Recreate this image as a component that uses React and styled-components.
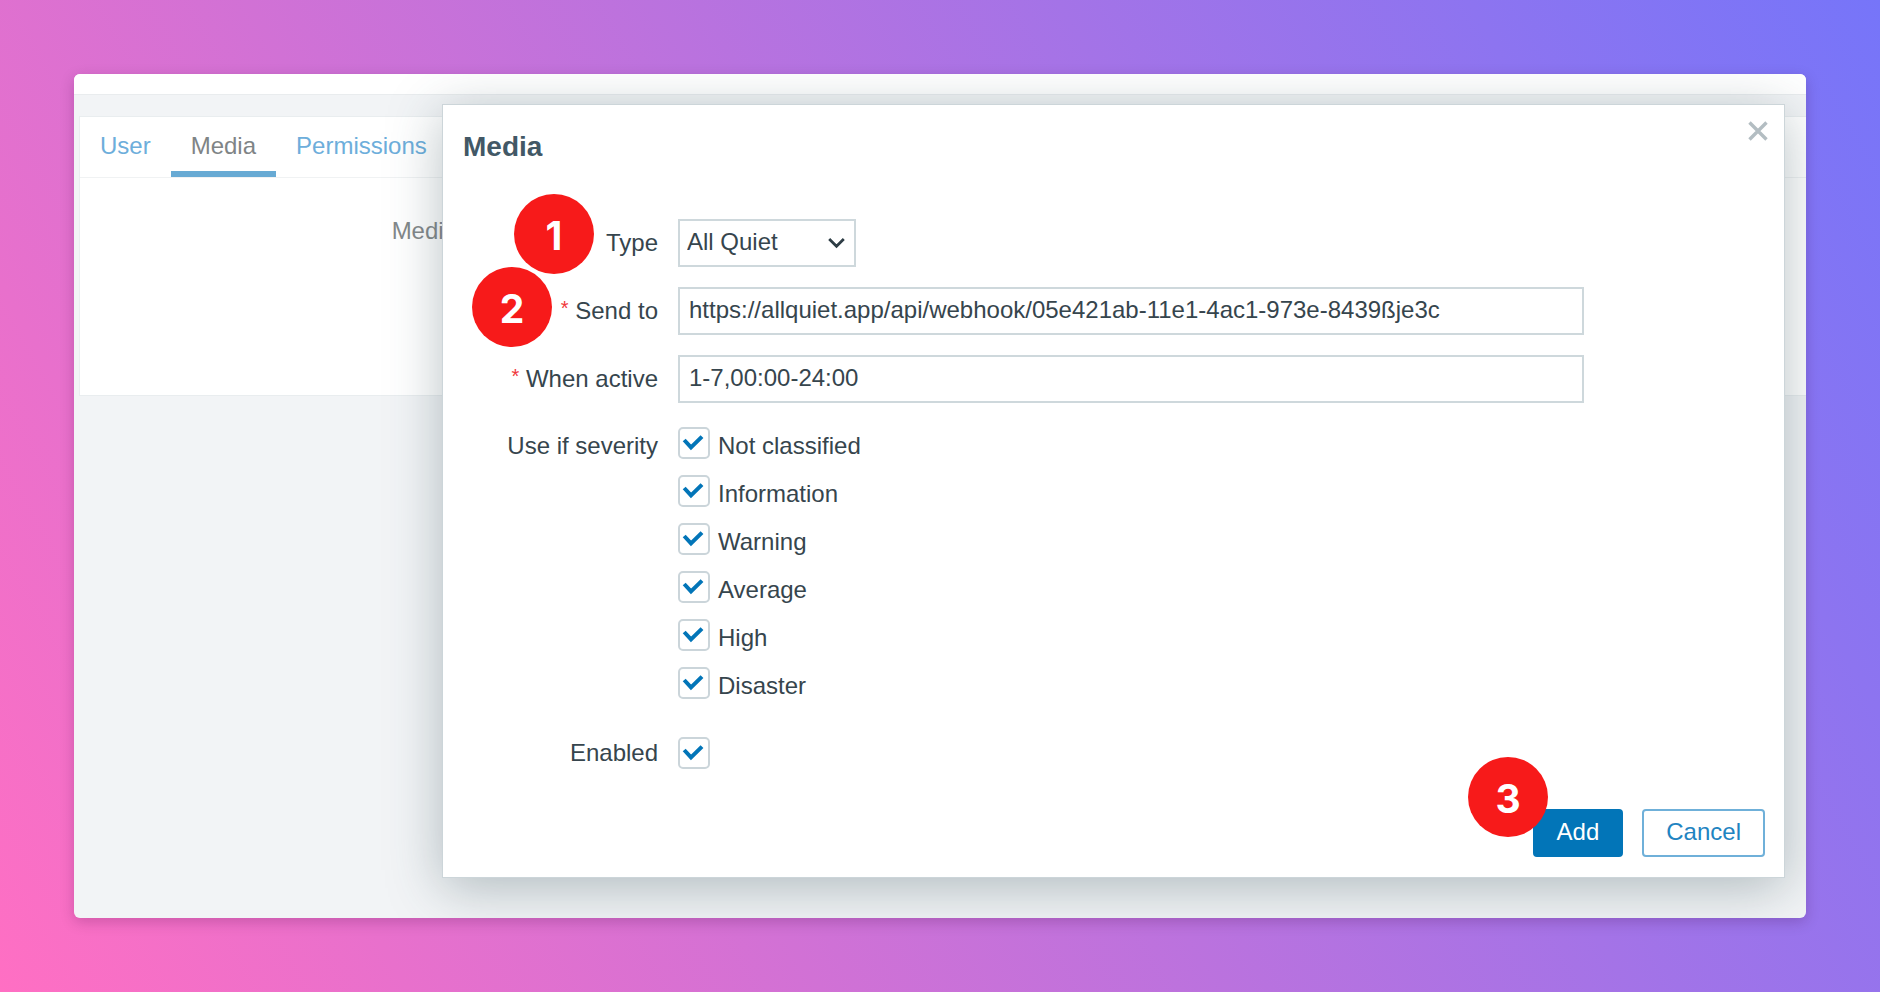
import React from "react";
import styled, { createGlobalStyle, css } from "styled-components";

const GlobalStyle = createGlobalStyle`
  * { box-sizing: border-box; }
  body {
    margin: 0;
    color: #36454d;
    font-family: "Liberation Sans", Arial, sans-serif;
    font-size: 24px;
    line-height: 28px;
  }
`;

const Backdrop = styled.div`
  display: flex;
  min-height: 100vh;
  padding: 74px;
  background: linear-gradient(60deg, #ff6fc3, #7675f9);
`;

const Window = styled.main`
  position: relative;
  flex: 1;
  min-width: 0;
  overflow: hidden;
  border-radius: 6px;
  background: #f2f4f6;
`;

const WindowShadow = styled.div`
  display: flex;
  flex: 1;
  min-width: 0;
  border-radius: 6px;
  box-shadow: 0 4px 14px rgba(60, 0, 60, 0.22);
`;

const TopBar = styled.div`
  height: 21px;
  border-bottom: 1px solid #e9ecee;
  background: #fff;
`;

const Card = styled.section`
  margin: 21px 0 0 5px;
  border: 1px solid #e9edef;
  border-right: 0;
  background: #fff;
`;

const Tabs = styled.nav`
  display: flex;
  height: 61px;
  border-bottom: 1px solid #f0f2f3;
`;

const Tab = styled.a`
  height: 60px;
  padding: 15px 20px 0;
  border-bottom: 6px solid ${(p) => (p.$active ? "#67aad4" : "transparent")};
  color: ${(p) => (p.$active ? "#7f8486" : "#6daedb")};
  text-decoration: none;
`;

const CardBody = styled.div`
  min-height: 217px;
  padding-top: 39px;
`;

const BackLabel = styled.div`
  width: 377px;
  color: #83888a;
  text-align: right;
`;

const Dialog = styled.form`
  position: absolute;
  top: 30px;
  left: 368px;
  right: 21px;
  padding: 26px 19px 20px 20px;
  border: 1px solid #ccd5d9;
  background: #fff;
  box-shadow: 0 10px 50px rgba(50, 75, 85, 0.34);
`;

const Title = styled.h1`
  margin: 0 0 56px;
  color: #425866;
  font-size: 28px;
  line-height: 32px;
`;

const CloseButton = styled.button`
  position: absolute;
  top: 11px;
  right: 11px;
  width: 30px;
  height: 30px;
  padding: 0;
  border: 0;
  background: none;

  svg { display: block; }
`;

const Fields = styled.div`
  display: grid;
  row-gap: 20px;
`;

const fieldGrid = css`
  display: grid;
  grid-template-columns: 195px minmax(0, 906px);
  column-gap: 20px;
`;

const Field = styled.div`
  ${fieldGrid}
  align-items: center;
  min-height: 48px;
`;

const FieldGroup = styled.div`
  ${fieldGrid}
  padding: 4px 0 10px;
`;

const Label = styled.label`
  padding-bottom: 1px;
  text-align: right;
  white-space: nowrap;
`;

const GroupLabel = styled.span`
  padding-top: 5px;
  text-align: right;
`;

const Required = styled.span`
  color: #f0383c;
  font-size: 20px;
  line-height: 0;
  vertical-align: 4px;
`;

const TextInput = styled.input`
  width: 100%;
  height: 48px;
  padding: 0 9px 2px;
  border: 2px solid #ced8dc;
  border-radius: 0;
  background: #fff;
  color: inherit;
  font: inherit;
`;

const SelectBox = styled.div`
  position: relative;
  width: 178px;

  svg {
    position: absolute;
    top: 16px;
    right: 11px;
    pointer-events: none;
  }
`;

const Select = styled.select`
  display: block;
  width: 100%;
  height: 48px;
  padding: 0 32px 2px 7px;
  border: 2px solid #ced8dc;
  border-radius: 0;
  appearance: none;
  background: #fff;
  color: inherit;
  font: inherit;
`;

const CheckList = styled.div`
  display: grid;
  row-gap: 16px;
`;

const CheckRow = styled.label`
  display: flex;
  gap: 8px;
  height: 32px;
  line-height: 38px;
`;

const CheckBox = styled.span`
  position: relative;
  width: 32px;
  height: 32px;

  input {
    display: block;
    width: 32px;
    height: 32px;
    margin: 0;
    border: 2px solid #cbd5da;
    border-radius: 5px;
    appearance: none;
    background: #fff;
  }

  svg {
    position: absolute;
    inset: 0;
    visibility: hidden;
    pointer-events: none;
  }

  input:checked + svg { visibility: visible; }
`;

const Footer = styled.footer`
  display: flex;
  justify-content: flex-end;
  gap: 19px;
  margin-top: 32px;
`;

const Button = styled.button`
  height: 48px;
  padding: 0 22px 2px;
  border: 2px solid ${(p) => (p.$primary ? "#0275b8" : "#6fb0d9")};
  border-radius: 4px;
  background: ${(p) => (p.$primary ? "#0275b8" : "#fff")};
  color: ${(p) => (p.$primary ? "#fff" : "#1f84c1")};
  font: inherit;
`;

const Badge = styled.span`
  position: absolute;
  top: ${(p) => p.$top};
  right: ${(p) => p.$right};
  bottom: ${(p) => p.$bottom};
  left: ${(p) => p.$left};
  display: flex;
  align-items: center;
  justify-content: center;
  width: 80px;
  height: 80px;
  padding-top: 3px;
  border-radius: 50%;
  background: #f71a1a;
  color: #fff;
  font-family: Inter, sans-serif;
  font-size: 39px;
  font-weight: 700;
  line-height: 48px;
`;

const severities = ["Not classified", "Information", "Warning", "Average", "High", "Disaster"];

function Check({ id }) {
  return (
    <CheckBox>
      <input id={id} type="checkbox" defaultChecked />
      <svg width="32" height="32" viewBox="0 0 32 32" fill="none" stroke="#0275b8" strokeWidth="4">
        <path d="M6.2 13l6.8 7.4L24 9.6" />
      </svg>
    </CheckBox>
  );
}

export default function App() {
  return (
    <Backdrop>
      <GlobalStyle />
      <WindowShadow>
        <Window>
          <TopBar />
          <Card>
            <Tabs>
              <Tab href="#user">User</Tab>
              <Tab href="#media" $active>Media</Tab>
              <Tab href="#permissions">Permissions</Tab>
            </Tabs>
            <CardBody>
              <BackLabel>Media</BackLabel>
            </CardBody>
          </Card>

          <Dialog role="dialog" aria-labelledby="dialog-title" onSubmit={(e) => e.preventDefault()}>
            <Title id="dialog-title">Media</Title>
            <CloseButton type="button" aria-label="Close">
              <svg width="30" height="30" viewBox="0 0 30 30" fill="none" stroke="#b3bdc2" strokeWidth="3.4">
                <path d="M6.5 6.5l17 17M23.5 6.5l-17 17" />
              </svg>
            </CloseButton>

            <Fields>
              <Field>
                <Label htmlFor="type">Type</Label>
                <SelectBox>
                  <Select id="type" defaultValue="All Quiet">
                    <option>All Quiet</option>
                  </Select>
                  <svg width="17" height="16" viewBox="0 0 17 16" fill="none" stroke="#2f3e46" strokeWidth="2.8">
                    <path d="M1.2 4l7.3 7.2L15.8 4" />
                  </svg>
                </SelectBox>
              </Field>
              <Field>
                <Label htmlFor="send-to"><Required>*</Required> Send to</Label>
                <TextInput
                  id="send-to"
                  type="text"
                  defaultValue="https://allquiet.app/api/webhook/05e421ab-11e1-4ac1-973e-8439ßje3c"
                />
              </Field>
              <Field>
                <Label htmlFor="when-active"><Required>*</Required> When active</Label>
                <TextInput id="when-active" type="text" defaultValue="1-7,00:00-24:00" />
              </Field>
              <FieldGroup role="group" aria-labelledby="severity">
                <GroupLabel id="severity">Use if severity</GroupLabel>
                <CheckList>
                  {severities.map((name) => (
                    <CheckRow key={name}>
                      <Check />
                      {name}
                    </CheckRow>
                  ))}
                </CheckList>
              </FieldGroup>
              <Field>
                <Label htmlFor="enabled">Enabled</Label>
                <Check id="enabled" />
              </Field>
            </Fields>

            <Footer>
              <Button type="submit" $primary>Add</Button>
              <Button type="button">Cancel</Button>
            </Footer>

            <Badge $top="89px" $left="71px">1</Badge>
            <Badge $top="162px" $left="29px">2</Badge>
            <Badge $bottom="40px" $right="236px">3</Badge>
          </Dialog>
        </Window>
      </WindowShadow>
    </Backdrop>
  );
}
